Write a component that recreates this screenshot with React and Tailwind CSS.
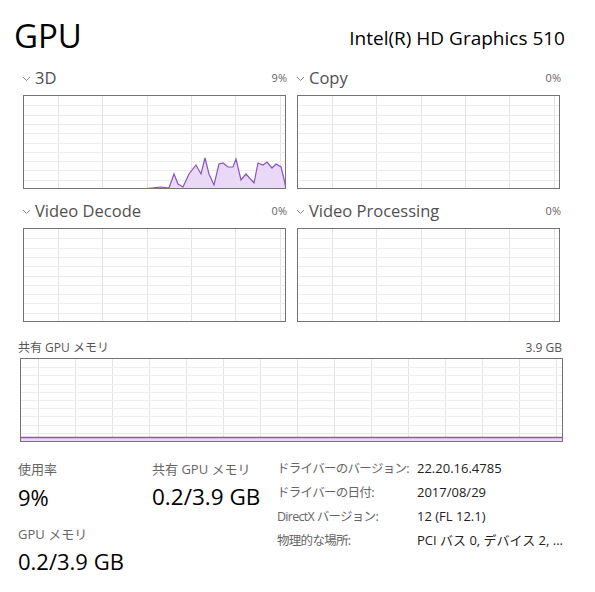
const font = { fontFamily: '"Open Sans", "Noto Sans CJK JP", sans-serif' };

const pts3d = [
  [122, 92.7], [130, 91.8], [137, 91], [145, 92], [150, 78], [154, 88], [159, 91],
  [165, 78], [172, 69], [177, 78], [181, 62], [185, 78], [190, 89], [195, 68],
  [199, 67], [204, 71], [209, 71], [212, 63], [217, 84], [222, 78], [230, 87],
  [234, 67], [239, 69], [243, 66], [248, 72], [252, 68], [257, 71], [260, 83], [262, 93],
];

function Chevron() {
  return (
    <svg width="9" height="6" viewBox="0 0 9 6" className="mr-[4px] mt-[1px]">
      <path d="M1 1 L4.5 4.5 L8 1" fill="none" stroke="#8a8a8a" strokeWidth="1" />
    </svg>
  );
}

function Grid({ w, h, cols, offset, rows }) {
  const lines = [];
  for (let x = offset; x < w; x += cols) {
    lines.push(<line key={'v' + x} x1={Math.round(x) + 0.5} y1="0" x2={Math.round(x) + 0.5} y2={h} stroke="#e4e4e4" />);
  }
  for (let i = 1; i < rows; i++) {
    const y = Math.round((h / rows) * i) + 0.5;
    lines.push(<line key={'h' + i} x1="0" y1={y} x2={w} y2={y} stroke="#ececec" />);
  }
  return lines;
}

function Chart({ points }) {
  const w = 262, h = 93;
  const d = points ? points.map(p => p.join(',')).join(' ') : null;
  return (
    <div className="w-[263px] h-[94px] border border-[#737373] bg-white">
      <svg width={w - 1} height={h - 1} viewBox={`0 0 ${w - 1} ${h - 1}`} className="block">
        <Grid w={w} h={h} cols={44.3} offset={34} rows={10} />
        {d && (
          <>
            <polygon points={`${d} 122,93`} fill="#ead9f6" />
            <polyline points={d} fill="none" stroke="#8b53bd" strokeWidth="1.2" />
          </>
        )}
      </svg>
    </div>
  );
}

function Panel({ label, pct, points }) {
  return (
    <div className="flex flex-col">
      <div className="flex items-center justify-between w-[265px] h-[20px] -ml-[1px]">
        <div className="flex items-center text-[16.5px] text-[#505050]">
          <Chevron />
          <span>{label}</span>
        </div>
        <span className="text-[11px] text-[#666]">{pct}</span>
      </div>
      <div className="mt-[7px]">
        <Chart points={points} />
      </div>
    </div>
  );
}

function Info({ label, value }) {
  return (
    <div className="flex h-[24px] items-center whitespace-nowrap">
      <span className="w-[140px] text-[12.5px] tracking-[-0.7px] text-[#666]">{label}</span>
      <span className="text-[13px] text-[#222]">{value}</span>
    </div>
  );
}

export default function App() {
  const memW = 541, memH = 82;
  return (
    <div style={font} className="w-[595px] h-[592px] bg-white text-black pl-[23px] overflow-hidden">
      <div className="flex items-end justify-between w-[551px] h-[52px] -ml-[9px]">
        <span className="text-[33px] leading-none">GPU</span>
        <span className="text-[19px] leading-none mb-[4px]">Intel(R) HD Graphics 510</span>
      </div>
      <div className="grid grid-cols-[263px_263px] gap-x-[11px] gap-y-[12px] mt-[16px]">
        <Panel label="3D" pct="9%" points={pts3d} />
        <Panel label="Copy" pct="0%" />
        <Panel label="Video Decode" pct="0%" />
        <Panel label="Video Processing" pct="0%" />
      </div>
      <div className="-ml-[5px] mt-[17px] w-[544px]">
        <div className="flex justify-between text-[12px] text-[#555] h-[18px] items-center">
          <span>共有 GPU メモリ</span>
          <span>3.9 GB</span>
        </div>
        <div className="mt-[1px] w-[543px] h-[84px] border border-[#737373] ml-[2px]">
          <svg width={memW} height={memH} viewBox={`0 0 ${memW} ${memH}`} className="block">
            <Grid w={memW} h={memH} cols={37} offset={17} rows={10} />
            <rect x="0" y="78.5" width={memW} height="4" fill="#ead9f6" />
            <line x1="0" y1="78.5" x2={memW} y2="78.5" stroke="#8b53bd" strokeWidth="1.5" />
          </svg>
        </div>
      </div>
      <div className="flex -ml-[5px] mt-[18px]">
        <div className="w-[134px]">
          <div className="text-[13px] text-[#666] leading-[18px]">使用率</div>
          <div className="text-[22px] leading-[30px] mt-[4px]">9%</div>
          <div className="text-[13px] text-[#666] leading-[18px] mt-[13px]">GPU メモリ</div>
          <div className="text-[22px] leading-[30px] mt-[3px]">0.2/3.9 GB</div>
        </div>
        <div className="w-[125px]">
          <div className="text-[13px] text-[#666] leading-[18px]">共有 GPU メモリ</div>
          <div className="text-[22.5px] leading-[30px] mt-[4px]">0.2/3.9 GB</div>
        </div>
        <div className="-mt-[3px]">
          <Info label="ドライバーのバージョン:" value="22.20.16.4785" />
          <Info label="ドライバーの日付:" value="2017/08/29" />
          <Info label="DirectX バージョン:" value="12 (FL 12.1)" />
          <Info label="物理的な場所:" value="PCI バス 0, デバイス 2, ..." />
        </div>
      </div>
    </div>
  );
}
